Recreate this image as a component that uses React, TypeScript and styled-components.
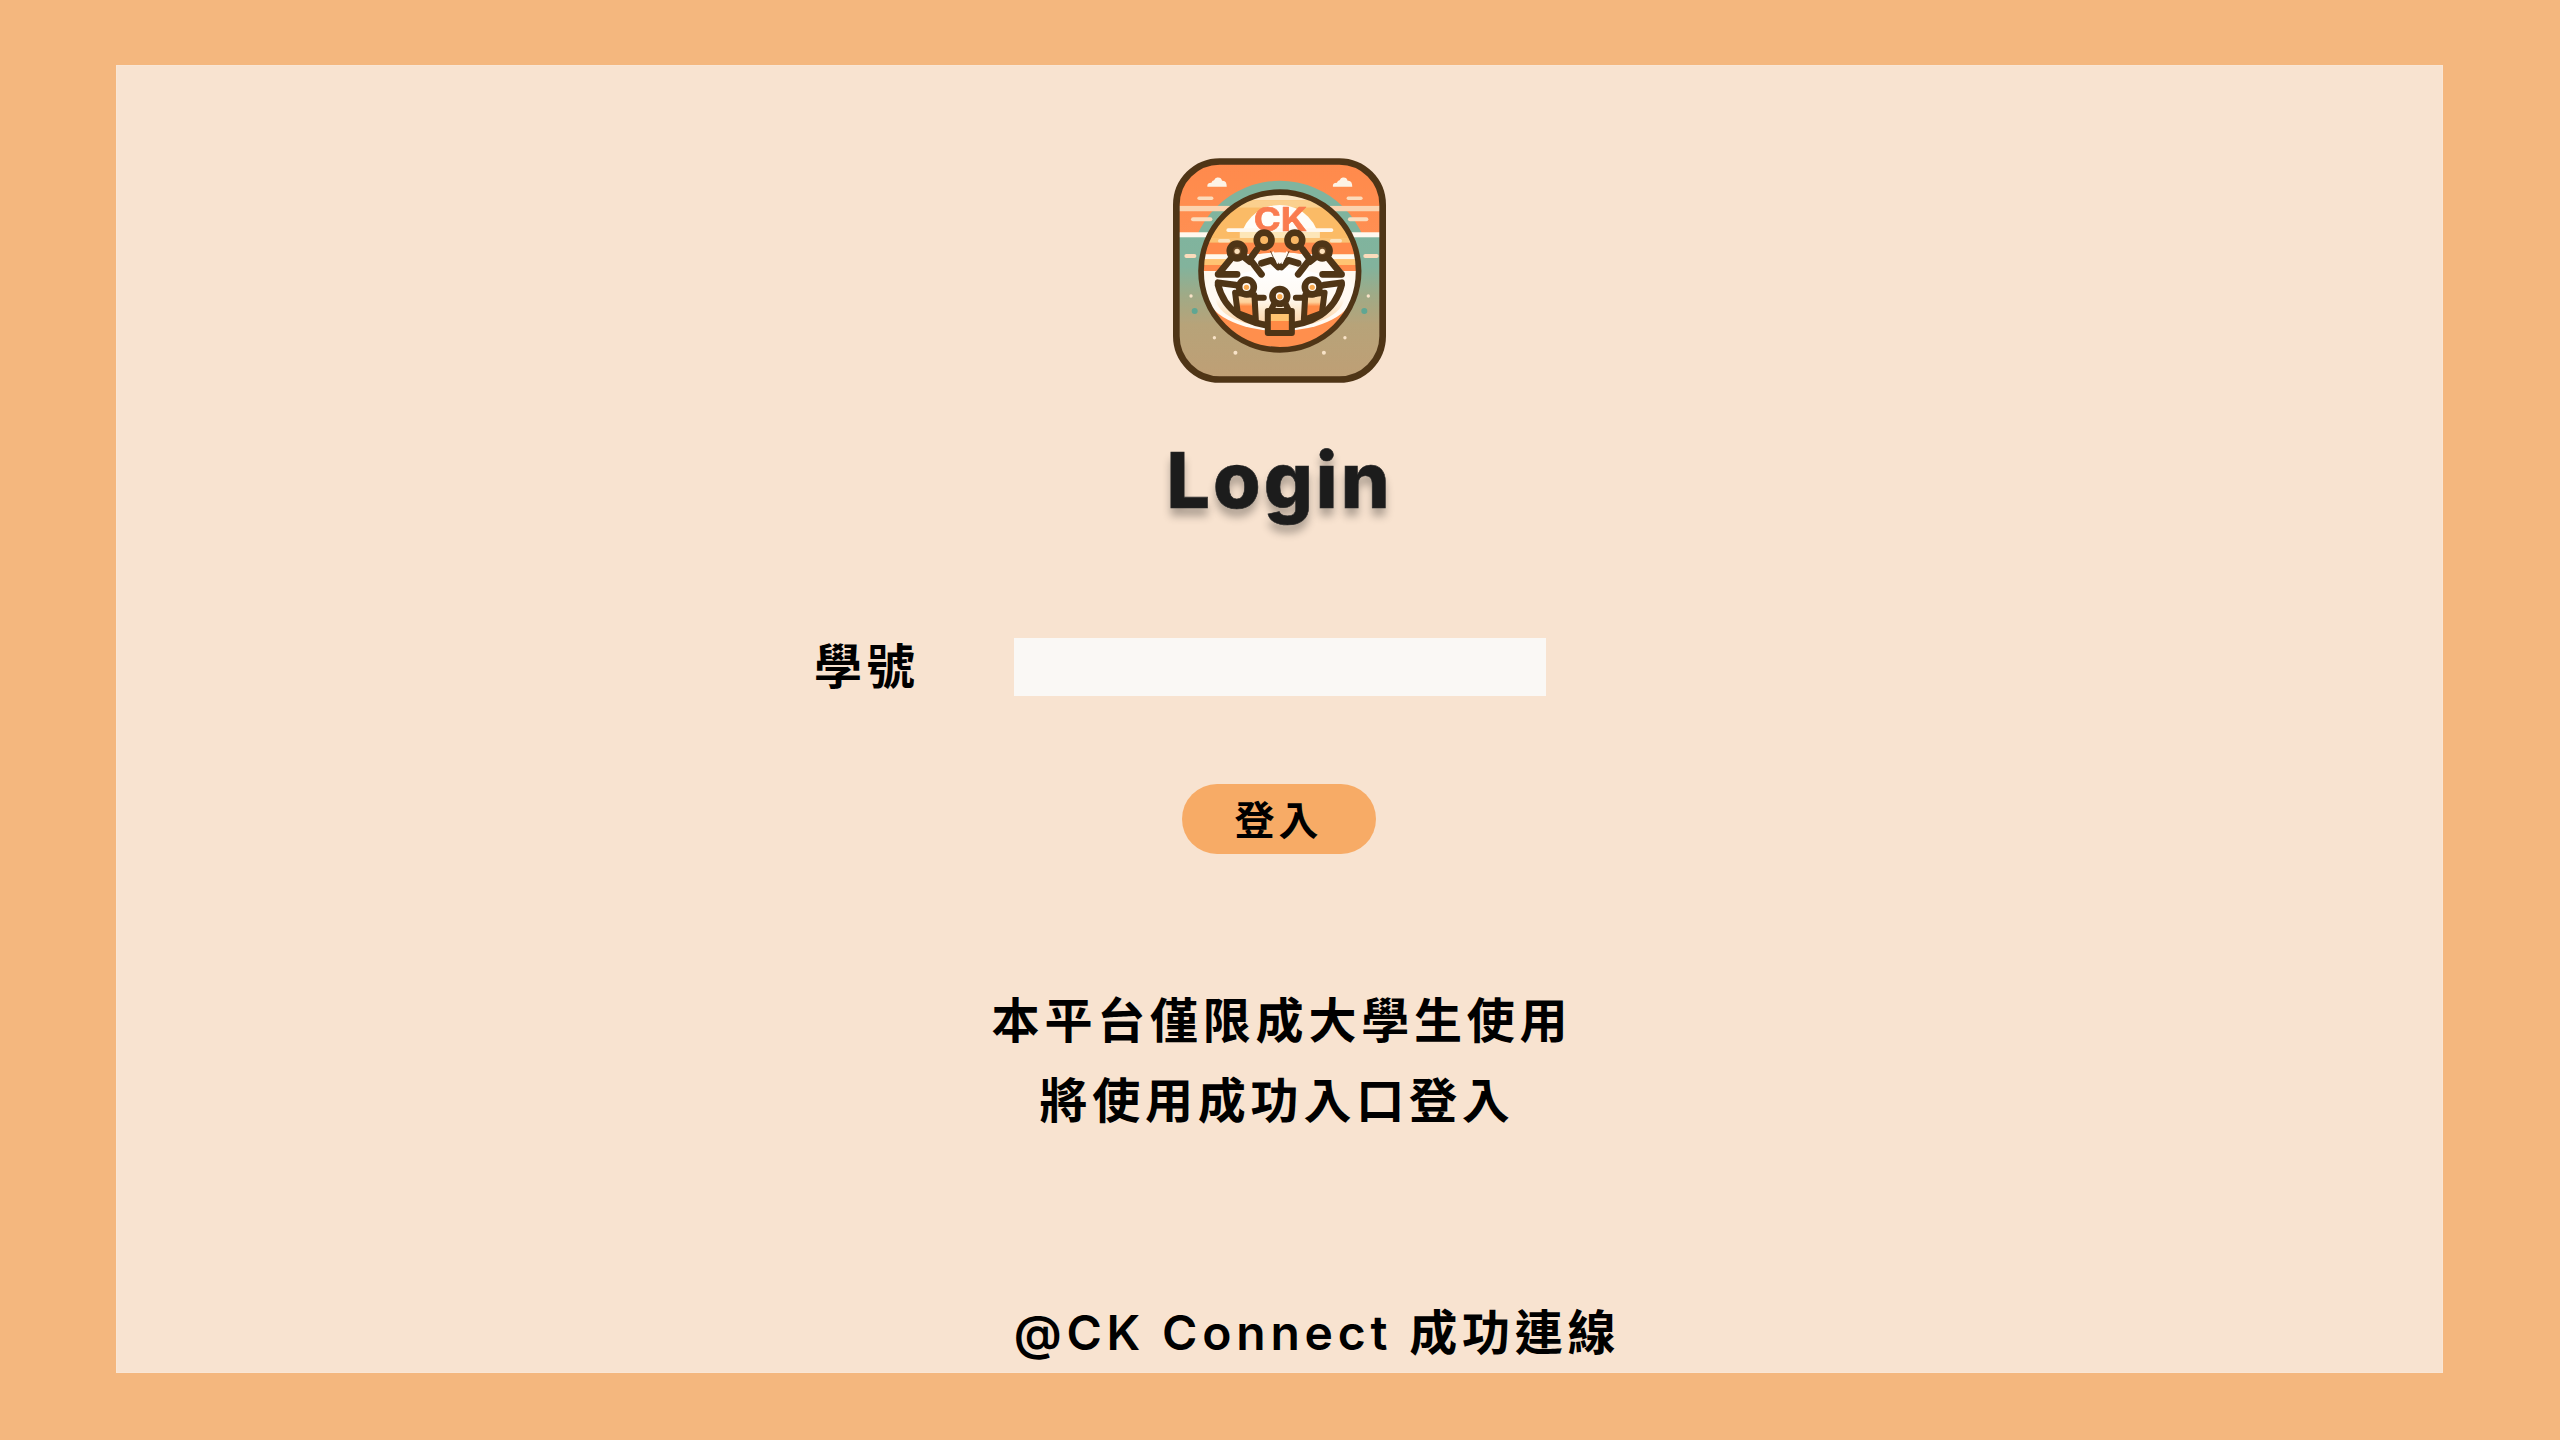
import React from "react";
import styled, { createGlobalStyle } from "styled-components";

const Global = createGlobalStyle`
  html, body { margin: 0; padding: 0; background: #f4b77e; }
  * { box-sizing: border-box; }
`;

const Page = styled.div`
  width: 2560px;
  height: 1440px;
  padding: 65px 117px 67px 116px;
  background: #f4b77e;
  font-family: "Inter", "Noto Sans CJK TC", sans-serif;
  color: #000;
`;

const Card = styled.main`
  height: 100%;
  padding-top: 92px;
  display: flex;
  flex-direction: column;
  align-items: center;
  background: #f8e3d0;
  border: 1px solid #f9e6d5;
`;

const LogoSvg = styled.svg`
  width: 213px;
  height: 225px;
  display: block;
`;

const Title = styled.h1`
  margin: 49px 0 0;
  font-size: 77px;
  line-height: 96px;
  font-weight: 800;
  letter-spacing: 3px;
  color: #1c1c1c;
  -webkit-text-stroke: 0.6px #2b2b2b;
  text-shadow: 0 8px 8px rgba(0, 0, 0, 0.3);
`;

const Row = styled.div`
  width: 100%;
  margin-top: 110px;
  display: grid;
  grid-template-columns: 1fr 532px 1fr;
  align-items: center;
`;

const Label = styled.label`
  justify-self: end;
  margin-right: 94px;
  font-size: 48px;
  line-height: 58px;
  font-weight: 700;
  letter-spacing: 4.8px;
`;

const Input = styled.input`
  width: 532px;
  height: 58px;
  padding: 0 12px;
  border: none;
  outline: none;
  background: #faf8f5;
`;

const Button = styled.button`
  width: 194px;
  height: 70px;
  margin: 88px 2px 0 0;
  padding: 0 0 3px;
  border: none;
  border-radius: 35px;
  background: #f7ab66;
  color: #000;
  font-family: inherit;
  font-size: 40px;
  font-weight: 700;
  letter-spacing: 4px;
`;

const Notice = styled.p`
  margin: 127px 0 0;
  text-align: center;
  font-size: 48px;
  line-height: 80px;
  font-weight: 700;
  letter-spacing: 4.8px;
`;

const NoticeLine = styled.span<{ $shift: number }>`
  display: block;
  padding-left: ${(p) => (p.$shift > 0 ? p.$shift : 0)}px;
  padding-right: ${(p) => (p.$shift < 0 ? -p.$shift : 0)}px;
`;

const Footer = styled.footer`
  margin-top: 163px;
  padding-left: 75px;
  font-size: 48px;
  line-height: 58px;
  font-weight: 600;
  letter-spacing: 4.8px;
  white-space: pre;
`;

const BROWN = "#4f3519";

const Cloud = ({ x, y }: { x: number; y: number }) => (
  <path
    d={`M${x - 28} ${y + 10} q-2 -12 12 -12 q2 -8 8 -8 q4 -10 12 -8 q10 0 12 10 q14 -2 14 18 z`}
    fill="#fdf3e6"
  />
);

const Dash = ({ x1, x2, y, h = 10, c = "#fbdcbc" }: { x1: number; x2: number; y: number; h?: number; c?: string }) => (
  <rect x={x1} y={y - h / 2} width={x2 - x1} height={h} rx={h / 2} fill={c} />
);

const Head = ({ x, y, fill, dot }: { x: number; y: number; fill: string; dot: string }) => (
  <g>
    <circle cx={x} cy={y} r={22} fill={fill} stroke={BROWN} strokeWidth={20} />
    <circle cx={x} cy={y + 1} r={8} fill={dot} />
  </g>
);

const Logo = () => (
  <LogoSvg viewBox="70 52 638 673" role="img" aria-label="CK Connect">
    <defs>
      <linearGradient id="sky" x1="0" y1="0" x2="0" y2="1">
        <stop offset="0" stopColor="#ff8a4c" />
        <stop offset="1" stopColor="#ff8f52" />
      </linearGradient>
      <linearGradient id="land" x1="0" y1="0" x2="0" y2="1">
        <stop offset="0" stopColor="#80b49e" />
        <stop offset="0.22" stopColor="#82b39c" />
        <stop offset="0.42" stopColor="#a0aa86" />
        <stop offset="0.62" stopColor="#b7a379" />
        <stop offset="1" stopColor="#bf9f75" />
      </linearGradient>
      <linearGradient id="torso" x1="0" y1="0" x2="0" y2="1">
        <stop offset="0" stopColor="#ffc471" />
        <stop offset="0.45" stopColor="#ffc471" />
        <stop offset="0.45" stopColor="#ff8a45" />
        <stop offset="1" stopColor="#ff8a45" />
      </linearGradient>
      <linearGradient id="sideTorso" x1="0" y1="0" x2="0" y2="1">
        <stop offset="0" stopColor="#fde2bd" />
        <stop offset="0.35" stopColor="#fdd29c" />
        <stop offset="0.5" stopColor="#ff8a45" />
        <stop offset="1" stopColor="#ff8a45" />
      </linearGradient>
      <linearGradient id="tableFill" x1="0" y1="0" x2="0" y2="1">
        <stop offset="0" stopColor="#ffffff" />
        <stop offset="0.5" stopColor="#fffaf3" />
        <stop offset="0.72" stopColor="#fde6c8" />
        <stop offset="1" stopColor="#fbcfa3" />
      </linearGradient>
      <clipPath id="tile">
        <rect x="80" y="62" width="618" height="653" rx="130" />
      </clipPath>
      <clipPath id="disc">
        <circle cx="390" cy="390" r="236" />
      </clipPath>
      <filter id="soft" x="-5%" y="-5%" width="110%" height="110%">
        <feGaussianBlur stdDeviation="1.6" />
      </filter>
    </defs>
    <g filter="url(#soft)">
      <g clipPath="url(#tile)">
        <rect x="80" y="62" width="618" height="220" fill="url(#sky)" />
        <circle cx="390" cy="390" r="270" fill="#80b49e" />
        <rect x="80" y="282" width="618" height="433" fill="url(#land)" />
        <rect x="80" y="195" width="160" height="16" fill="#fbd3ae" />
        <rect x="540" y="195" width="160" height="16" fill="#fbd3ae" />
        <rect x="80" y="274" width="110" height="15" fill="#fff8ee" />
        <rect x="590" y="274" width="110" height="15" fill="#fff8ee" />
        <Dash x1={143} x2={191} y={172} />
        <Dash x1={590} x2={638} y={172} />
        <Dash x1={124} x2={188} y={235} h={12} />
        <Dash x1={594} x2={655} y={235} h={12} />
        <Dash x1={104} x2={140} y={345} h={12} />
        <Dash x1={640} x2={686} y={345} h={12} />
        <Cloud x={201} y={128} />
        <Cloud x={577} y={128} />
        <circle cx="124" cy="465" r="5" fill="#f8e3c8" />
        <circle cx="655" cy="465" r="5" fill="#f8e3c8" />
        <circle cx="135" cy="510" r="9" fill="#5ea693" />
        <circle cx="643" cy="510" r="9" fill="#5ea693" />
        <circle cx="194" cy="590" r="5" fill="#f8e3c8" />
        <circle cx="585" cy="590" r="5" fill="#f8e3c8" />
        <circle cx="257" cy="635" r="6" fill="#f8e3c8" />
        <circle cx="522" cy="635" r="6" fill="#f8e3c8" />
      </g>
      <rect x="80" y="62" width="618" height="653" rx="130" fill="none" stroke={BROWN} strokeWidth="20" />

      <g clipPath="url(#disc)">
        <rect x="150" y="150" width="480" height="480" fill="#fbbb66" />
        <rect x="150" y="150" width="480" height="28" fill="#fbe3c0" />
        <rect x="150" y="178" width="480" height="22" fill="#fbd08e" />
        <circle cx="390" cy="312" r="120" fill="#fffdf8" />
        <rect x="230" y="262" width="320" height="11" rx="5" fill="#fff8ee" />
        <rect x="270" y="273" width="240" height="18" fill="#fde6b8" />
        <rect x="150" y="291" width="480" height="20" fill="#fbc273" />
        <rect x="150" y="305" width="480" height="35" fill="#ff8a4c" />
        <rect x="205" y="294" width="36" height="11" rx="5" fill="#fbe3c0" />
        <rect x="540" y="294" width="36" height="11" rx="5" fill="#fbe3c0" />
        <rect x="150" y="340" width="480" height="15" fill="#fff8ee" />
        <rect x="150" y="355" width="480" height="17" fill="#ffc473" />
        <rect x="150" y="372" width="480" height="18" fill="#ff8a4c" />
        <rect x="150" y="390" width="480" height="250" fill="#fff8ee" />
        <ellipse cx="390" cy="492" rx="226" ry="126" fill="#ff8f4e" />
        <ellipse cx="390" cy="452" rx="222" ry="118" fill="#fffaf3" />
        <ellipse cx="390" cy="470" rx="192" ry="90" fill="url(#tableFill)" />
      </g>
      <circle cx="390" cy="390" r="236" fill="none" stroke={BROWN} strokeWidth="17" />

      <text
        x="392"
        y="270"
        textAnchor="middle"
        textLength="160"
        lengthAdjust="spacingAndGlyphs"
        fontFamily="Inter, sans-serif"
        fontWeight="700"
        fontSize="96"
        stroke="#fa7c4f"
        strokeWidth="2"
        strokeLinejoin="round"
        fill="#fa7c4f"
      >
        CK
      </text>

      <g fill="none" stroke={BROWN} strokeWidth="20" strokeLinecap="round" strokeLinejoin="round">
        <path d="M205 432 C225 510 290 552 390 556 C490 552 555 510 575 432" />
        <path d="M322 325 L300 355 L335 400 M335 367 L365 358 L385 378" />
        <path d="M458 325 L480 355 L445 400 M445 367 L415 358 L395 378" />
        <path d="M242 355 L207 398 M205 400 L262 400 M205 425 L258 432 M285 350 L300 362" />
        <path d="M538 355 L573 398 M575 400 L518 400 M575 425 L522 432 M495 350 L480 362" />
      </g>
      <path d="M369 332 L384 368 M412 332 L396 368" stroke="#fffaf3" strokeWidth="5" fill="none" />
      <path d="M362 330 L382 376 M418 330 L398 376" stroke={BROWN} strokeWidth="2.5" fill="none" />

      <Head x={343} y={297} fill="#f9b765" dot="#f9b765" />
      <Head x={435} y={297} fill="#f9b765" dot="#f9b765" />
      <Head x={262} y={330} fill="#6b4a25" dot="#fde2bd" />
      <Head x={517} y={330} fill="#6b4a25" dot="#fde2bd" />

      <g stroke={BROWN} strokeWidth="18" strokeLinejoin="round" strokeLinecap="round">
        <path d="M256 455 L314 462 L318 536 L264 516 Z" fill="url(#sideTorso)" />
        <path d="M524 455 L466 462 L462 536 L516 516 Z" fill="url(#sideTorso)" />
        <path d="M318 470 L342 470 M462 470 L438 470" fill="none" />
        <path d="M362 510 L372 490 M418 510 L408 490" fill="none" />
        <rect x="354" y="510" width="72" height="66" fill="url(#torso)" />
      </g>
      <Head x={290} y={438} fill="#fffaf3" dot="#f9a94f" />
      <Head x={487} y={438} fill="#fffaf3" dot="#f9a94f" />
      <Head x={390} y={466} fill="#fffaf3" dot="#f9a94f" />
    </g>
  </LogoSvg>
);

export default function App() {
  return (
    <>
      <Global />
      <Page>
        <Card>
          <Logo />
          <Title>Login</Title>
          <Row>
            <Label htmlFor="student-id">學號</Label>
            <Input id="student-id" type="text" />
          </Row>
          <Button type="button">登入</Button>
          <Notice>
            <NoticeLine $shift={5}>本平台僅限成大學生使用</NoticeLine>
            <NoticeLine $shift={-5}>將使用成功入口登入</NoticeLine>
          </Notice>
          <Footer>@CK Connect 成功連線</Footer>
        </Card>
      </Page>
    </>
  );
}
